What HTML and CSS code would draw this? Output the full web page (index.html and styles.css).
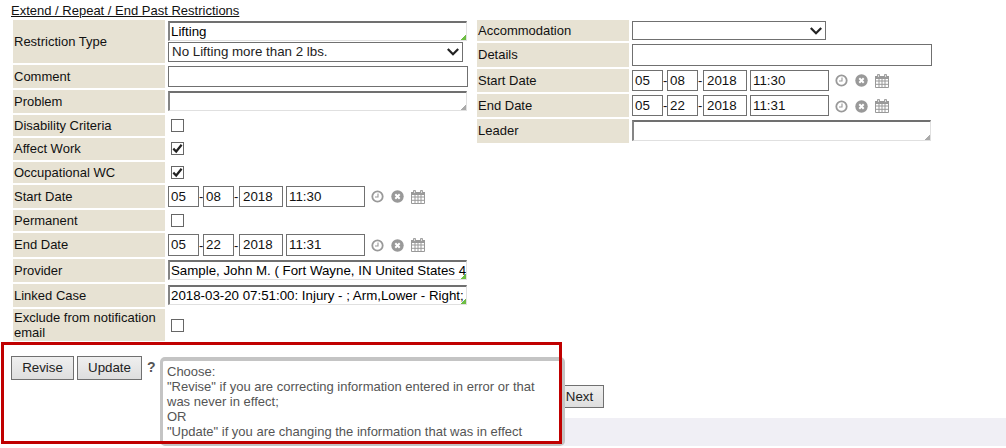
FILE: index.html
```
<!DOCTYPE html>
<html lang="en">
<head>
<meta charset="utf-8">
<title>Restrictions</title>
<link rel="stylesheet" href="styles.css">
</head>
<body>
<svg class="defs" width="0" height="0">
  <symbol id="clock" viewBox="0 0 13 13"><circle cx="6.5" cy="6.5" r="5.2" fill="none" stroke="#999" stroke-width="1.8"/><path d="M7 3.5V7H4" fill="none" stroke="#999" stroke-width="1.1"/></symbol>
  <symbol id="clear" viewBox="0 0 13 13"><circle cx="6.5" cy="6.5" r="6.2" fill="#999"/><path d="M4.300 4.300l4.400 4.400M8.700 4.300L4.300 8.700" stroke="#fff" stroke-width="2"/></symbol>
  <symbol id="calendar" viewBox="0 0 14 14"><path d="M.5 3.500h13v10H.5zM.5 7h13M.5 10.300h13M4 4v10M7 4v10M10 4v10" fill="none" stroke="#999"/><path d="M0 2h14v3H0z" fill="#999"/><path d="M2.500 .5h2v3h-2zM9.500 .5h2v3h-2z" fill="#ddd" stroke="#999" stroke-width=".9"/></symbol>
  <symbol id="chevron" viewBox="0 0 12 8"><path d="M.8 1L6 6.200 11.200 1" fill="none" stroke="#222" stroke-width="2.200"/></symbol>
  <symbol id="tick" viewBox="0 0 11 11"><path d="M1.300 5.600L4.200 8.500 9.600 1.800" fill="none" stroke="#222" stroke-width="2.200"/></symbol>
</svg>
<main class="page">
  <a class="heading">Extend / Repeat / End Past Restrictions</a>
  <div class="columns">
    <section class="form left">
      <div class="label">Restriction Type</div>
      <div class="field stack">
        <div class="area filled">Lifting</div>
        <div class="select"><span>No Lifting more than 2 lbs.</span><svg><use href="#chevron"/></svg></div>
      </div>
      <div class="label">Comment</div><div class="field"><div class="input wide"></div></div>
      <div class="label">Problem</div><div class="field top"><div class="area"></div></div>
      <div class="label">Disability Criteria</div><div class="field"><div class="check"></div></div>
      <div class="label lifted">Affect Work</div><div class="field"><div class="check raised"><svg><use href="#tick"/></svg></div></div>
      <div class="label">Occupational WC</div><div class="field"><div class="check"><svg><use href="#tick"/></svg></div></div>
      <div class="label">Start Date</div>
      <div class="field date"><div class="input part">05</div><span>-</span><div class="input part">08</div><span class="sep">-</span><div class="input year">2018</div><div class="input time">11:30</div><svg class="icon"><use href="#clock"/></svg><svg class="icon"><use href="#clear"/></svg><svg class="icon cal"><use href="#calendar"/></svg></div>
      <div class="label">Permanent</div><div class="field"><div class="check"></div></div>
      <div class="label lifted">End Date</div>
      <div class="field date"><div class="input part tall">05</div><span>-</span><div class="input part tall">22</div><span class="sep">-</span><div class="input year tall">2018</div><div class="input time tall">11:31</div><svg class="icon"><use href="#clock"/></svg><svg class="icon"><use href="#clear"/></svg><svg class="icon cal"><use href="#calendar"/></svg></div>
      <div class="label">Provider</div><div class="field top"><div class="area filled">Sample, John M. ( Fort Wayne, IN United States 4</div></div>
      <div class="label">Linked Case</div><div class="field top"><div class="area filled">2018-03-20 07:51:00: Injury - ; Arm,Lower - Right;</div></div>
      <div class="label">Exclude from notification email</div><div class="field"><div class="check"></div></div>
    </section>
    <section class="form right">
      <div class="label">Accommodation</div><div class="field"><div class="select short"><span></span><svg><use href="#chevron"/></svg></div></div>
      <div class="label lifted">Details</div><div class="field"><div class="input wide tall"></div></div>
      <div class="label">Start Date</div>
      <div class="field date"><div class="input part">05</div><span>-</span><div class="input part">08</div><span class="sep">-</span><div class="input year">2018</div><div class="input time">11:30</div><svg class="icon"><use href="#clock"/></svg><svg class="icon"><use href="#clear"/></svg><svg class="icon cal"><use href="#calendar"/></svg></div>
      <div class="label">End Date</div>
      <div class="field date late"><div class="input part">05</div><span>-</span><div class="input part">22</div><span class="sep">-</span><div class="input year">2018</div><div class="input time">11:31</div><svg class="icon"><use href="#clock"/></svg><svg class="icon"><use href="#clear"/></svg><svg class="icon cal"><use href="#calendar"/></svg></div>
      <div class="label lifted">Leader</div><div class="field top"><div class="area leader"></div></div>
    </section>
  </div>
  <div class="actions">
    <div class="button revise">Revise</div>
    <div class="button update">Update</div>
    <span class="help">?</span>
    <div class="button next">Next</div>
  </div>
  <div class="footer"></div>
  <div class="tooltip">Choose:<br>"Revise" if you are correcting information entered in error or that<br>was never in effect;<br>OR<br>"Update" if you are changing the information that was in effect</div>
  <div class="highlight"></div>
</main>
</body>
</html>
```
FILE: styles.css
```
* { box-sizing: border-box; }
body { margin: 0; background: #fff; font: 13px/15px "Liberation Sans", Arial, sans-serif; color: #111; }
.defs { position: absolute; }
.page { position: relative; width: 1006px; height: 448px; overflow: hidden; display: flex; flex-direction: column; }
.heading { height: 20px; padding: 3px 0 0 11px; text-decoration: underline; white-space: nowrap; }
.columns { display: flex; gap: 9px; padding-left: 13px; height: 321px; }
.form { display: grid; grid-template-columns: 152px 300px; column-gap: 3px; row-gap: 2px; align-content: start; }
.left { grid-template-rows: 43px 23px 23px 21px 22px 21px 23px 21px 24px 23px 23px 32px; }
.right { grid-template-rows: 21px 24px 23px 23px 24px; }
.label { display: flex; align-items: center; background: #e7e2d3; padding-left: 1px; }
.lifted { padding-bottom: 2px; }
.field { display: flex; align-items: center; min-width: 0; white-space: nowrap; }
.field.top { align-items: flex-start; padding-top: 1px; }
.stack { flex-direction: column; align-items: flex-start; justify-content: center; gap: 1px; }
.input { height: 21px; border: 1px solid #707070; padding: 2px 0 0 2px; background: #fff; font-size: 13.333px; }
.wide { width: 300px; }
.tall { height: 22px; }
.part { width: 31px; }
.year { width: 44px; padding-left: 3px; }
.time { width: 79px; margin-left: 3px; }
.date span { width: 4px; overflow: hidden; }
.date .sep { width: 5px; }
.area { position: relative; width: 299px; height: 20px; border: 1px solid #e0e0e0; border-top: 2px solid #707070; border-left: 2px solid #858585; padding: 1px 0 0 1px; overflow: hidden; color: #000; font-size: 13.300px; }
.area::after { content: ""; position: absolute; right: 0; bottom: 0; width: 5px; height: 5px; background: linear-gradient(135deg, transparent 48%, #aaa 50%); }
.area.filled::after { background: linear-gradient(135deg, transparent 48%, #6ebd43 50%); }
.leader { height: 21px; }
.select { display: flex; align-items: center; justify-content: space-between; width: 295px; height: 20px; border: 1px solid #707070; padding: 0 3px; color: #222; font-size: 13.333px; }
.select span { padding-bottom: 1px; }
.short { width: 194px; height: 19px; }
.select svg { width: 12px; height: 8px; }
.check { width: 13px; height: 13px; margin-left: 3px; border: 1px solid #666; }
.raised { margin-bottom: 1px; }
.check svg { display: block; width: 11px; height: 11px; }
.icon { width: 13px; height: 13px; margin-left: 6px; flex: none; }
.icon + .icon { margin-left: 7px; }
.icon.cal { width: 14px; height: 14px; }
.late .icon { margin-top: 1px; }
.actions { display: flex; align-items: flex-start; height: 77px; padding: 15px 0 0 11px; }
.button { display: flex; align-items: center; justify-content: center; height: 24px; border: 1px solid #707070; background: linear-gradient(#efefef, #dedede); color: #222; font-size: 13.333px; padding-bottom: 1px; }
.revise { width: 63px; margin-right: 3px; }
.update { width: 65px; }
.help { width: 9px; margin: 4px 0 0 5px; color: #555; font-weight: bold; font-size: 14px; }
.next { width: 49px; height: 23px; margin: 29px 0 0 399px; }
.footer { height: 28px; margin-left: 562px; background: #f0eff5; }
.tooltip { position: absolute; left: 160px; top: 357px; width: 405px; height: 89px; border: 3px solid #c4c4c4; border-top-width: 4px; border-radius: 5px; background: #fff; padding: 3px 0 0 4px; color: #555; white-space: nowrap; }
.highlight { position: absolute; left: 1px; top: 342px; width: 561px; height: 102px; border: 3px solid #c00000; }
```
